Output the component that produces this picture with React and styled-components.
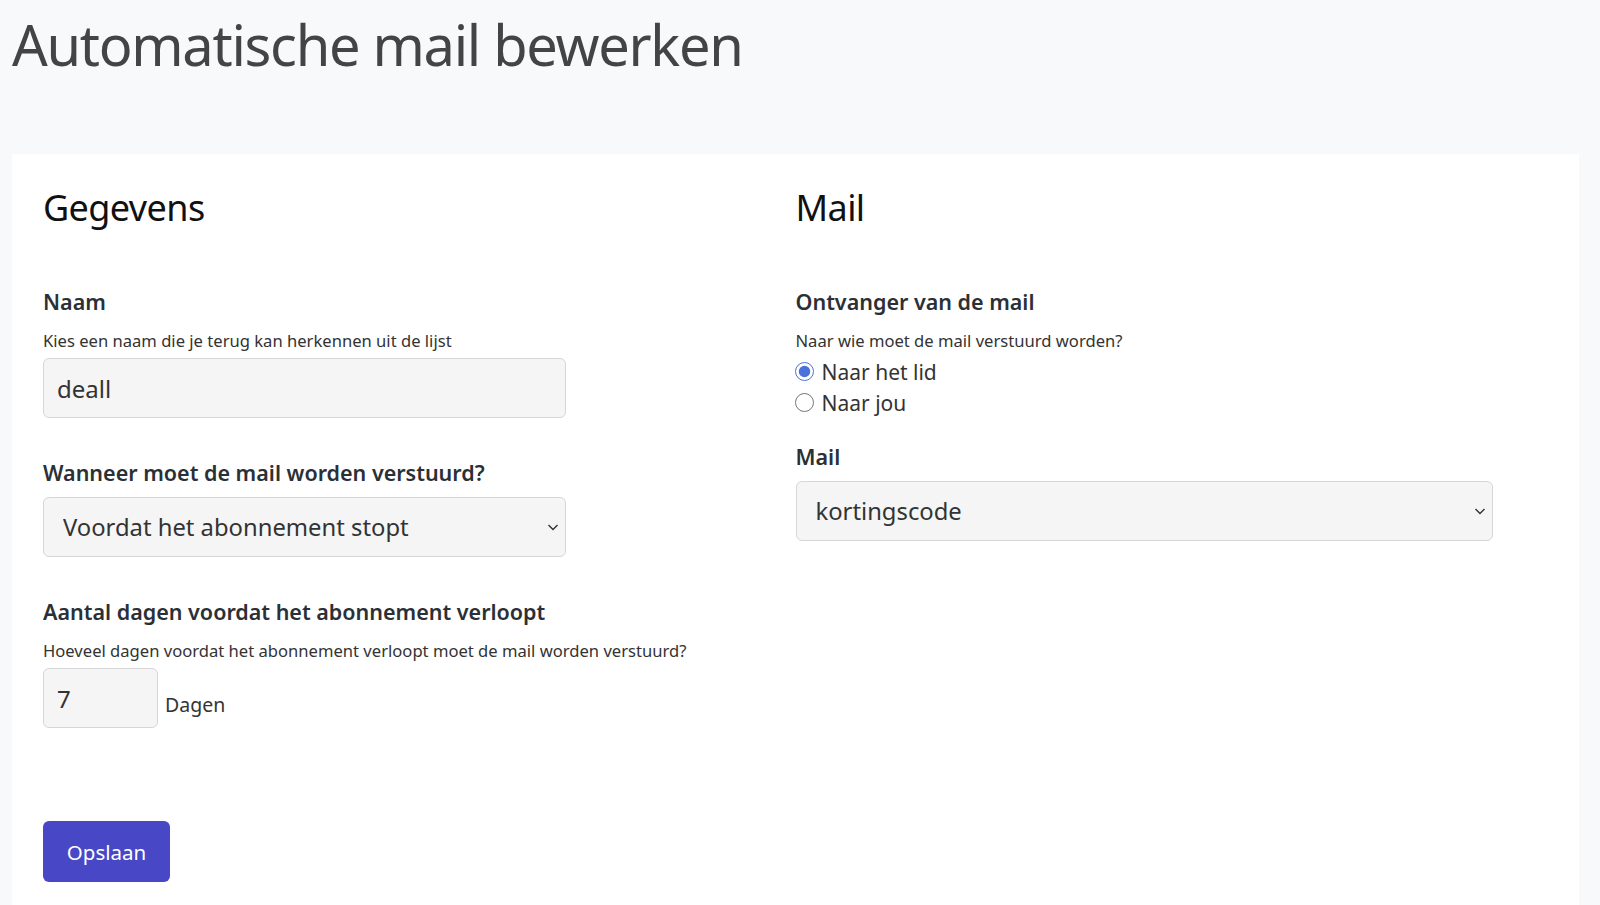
import styled, { createGlobalStyle } from 'styled-components';

const GlobalStyle = createGlobalStyle`
  body {
    margin: 0;
    background: #f8f9fa;
    font-family: 'Noto Sans', 'Open Sans', sans-serif;
    color: #333;
  }
`;

const Page = styled.div`
  padding: 0 21px 0 12px;
  min-height: 905px;
  box-sizing: border-box;
`;

const Title = styled.h1`
  margin: 0;
  padding-top: 10px;
  font-size: 56px;
  line-height: 68px;
  font-weight: 400;
  color: #444;
  letter-spacing: -1.3px;
`;

const Card = styled.div`
  margin-top: 76px;
  background: #fff;
  padding: 32px 31px 60px;
  min-height: 760px;
  box-sizing: border-box;
`;

const Columns = styled.div`
  display: grid;
  grid-template-columns: 1fr 1fr;
`;

const Column = styled.div`
  display: flex;
  flex-direction: column;
`;

const SectionTitle = styled.h2`
  margin: 0 0 58px;
  font-size: 36px;
  line-height: 44px;
  font-weight: 400;
  color: #111;
  letter-spacing: -0.6px;
`;

const Field = styled.div`
  display: flex;
  flex-direction: column;
  margin-bottom: ${(p) => p.$gap ?? 41}px;
`;

const Label = styled.label`
  font-size: 21.5px;
  line-height: 28px;
  font-weight: 600;
  color: #2b3036;
  margin-bottom: ${(p) => (p.$hint ? 13 : 10)}px;
`;

const Hint = styled.div`
  font-size: 16.6px;
  line-height: 24px;
  color: #333;
  margin-bottom: 5px;
`;

const TextInput = styled.input`
  box-sizing: border-box;
  width: ${(p) => p.$width}px;
  height: 60px;
  background: #f5f5f5;
  border: 1.5px solid #d6d6d6;
  border-radius: 6px;
  padding: 0 13px;
  font-family: inherit;
  font-size: 24px;
  color: #333;
  outline: none;
`;

const SelectWrap = styled.div`
  position: relative;
  width: ${(p) => p.$width}px;
`;

const Select = styled.select`
  appearance: none;
  box-sizing: border-box;
  width: 100%;
  height: 60px;
  background: #f5f5f5;
  border: 1.5px solid #d6d6d6;
  border-radius: 6px;
  padding: 0 40px 0 19px;
  font-family: inherit;
  font-size: 23.8px;
  color: #333;
  outline: none;
`;

const Chevron = styled.svg`
  position: absolute;
  right: 6px;
  top: 50%;
  width: 14px;
  height: 14px;
  margin-top: -7px;
  pointer-events: none;
`;

const InlineRow = styled.div`
  display: flex;
  align-items: flex-end;
  gap: 7px;
`;

const Unit = styled.span`
  font-size: 19.5px;
  line-height: 28px;
  color: #333;
  padding-bottom: 9px;
`;

const RadioGroup = styled.div`
  display: flex;
  flex-direction: column;
  margin-top: -2px;
  margin-bottom: 25px;
`;

const RadioRow = styled.label`
  display: flex;
  align-items: center;
  gap: 8px;
  height: 31px;
  font-size: 21px;
  color: #333;
  margin-left: -1px;
`;

const Radio = styled.input`
  margin: 0;
  width: 19px;
  height: 19px;
  accent-color: #4a72d8;
`;

const SaveButton = styled.button`
  margin-top: 93px;
  width: 127px;
  height: 61px;
  background: #4848c7;
  color: #fff;
  border: none;
  border-radius: 6px;
  font-family: inherit;
  font-size: 20.5px;
  cursor: pointer;
`;

const Dropdown = ({ width, value, options }) => (
  <SelectWrap $width={width}>
    <Select defaultValue={value}>
      {options.map((o) => (
        <option key={o}>{o}</option>
      ))}
    </Select>
    <Chevron viewBox="0 0 14 14" fill="none" stroke="#333" strokeWidth="1.4">
      <path d="M2.5 5 L7 9.5 L11.5 5" />
    </Chevron>
  </SelectWrap>
);

const App = () => {
  return (
    <Page>
      <GlobalStyle />
      <Title>Automatische mail bewerken</Title>
      <Card>
        <Columns>
          <Column>
            <SectionTitle>Gegevens</SectionTitle>
            <Field>
              <Label $hint>Naam</Label>
              <Hint>Kies een naam die je terug kan herkennen uit de lijst</Hint>
              <TextInput $width={523} defaultValue="deall" />
            </Field>
            <Field>
              <Label>Wanneer moet de mail worden verstuurd?</Label>
              <Dropdown
                width={523}
                value="Voordat het abonnement stopt"
                options={['Voordat het abonnement stopt', 'Nadat het abonnement start']}
              />
            </Field>
            <Field $gap={0}>
              <Label $hint>Aantal dagen voordat het abonnement verloopt</Label>
              <Hint>Hoeveel dagen voordat het abonnement verloopt moet de mail worden verstuurd?</Hint>
              <InlineRow>
                <TextInput $width={115} type="number" defaultValue="7" />
                <Unit>Dagen</Unit>
              </InlineRow>
            </Field>
          </Column>
          <Column>
            <SectionTitle>Mail</SectionTitle>
            <Field $gap={0}>
              <Label $hint>Ontvanger van de mail</Label>
              <Hint>Naar wie moet de mail verstuurd worden?</Hint>
              <RadioGroup>
                <RadioRow>
                  <Radio type="radio" name="to" defaultChecked />
                  Naar het lid
                </RadioRow>
                <RadioRow>
                  <Radio type="radio" name="to" />
                  Naar jou
                </RadioRow>
              </RadioGroup>
            </Field>
            <Field>
              <Label>Mail</Label>
              <Dropdown width={697} value="kortingscode" options={['kortingscode', 'welkom']} />
            </Field>
          </Column>
        </Columns>
        <SaveButton>Opslaan</SaveButton>
      </Card>
    </Page>
  );
};

export default App;
